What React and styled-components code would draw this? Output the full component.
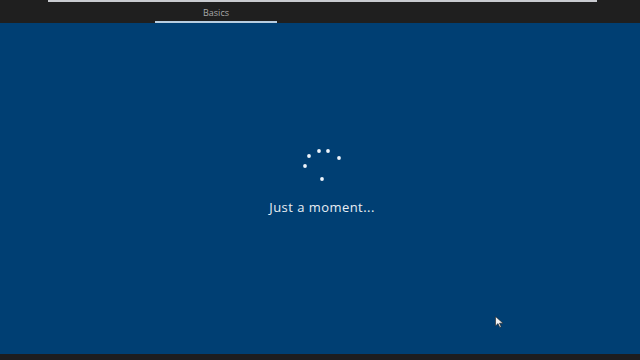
import React from 'react';
import styled, { createGlobalStyle } from 'styled-components';

const GlobalStyle = createGlobalStyle`
  html, body {
    margin: 0;
    padding: 0;
    background: #1e1e1e;
  }
  body {
    font-family: "Open Sans", "Noto Sans", sans-serif;
  }
`

const Screen = styled.div`
  position: relative;
  width: 640px;
  height: 360px;
  display: grid;
  grid-template-rows: 23px 1fr 6px;
  overflow: hidden;
  background: #1e1e1e;
`

const Header = styled.header`
  display: flex;
  flex-direction: column;
  background: #1f1f1f;
`

const Strip = styled.div`
  height: 2px;
  margin: 0 43px 0 48px;
  background: #c9cbd0;
`

const Tabs = styled.nav`
  flex: 1;
  display: flex;
  padding-left: 155px;
`

const Tab = styled.div`
  width: 122px;
  display: flex;
  align-items: center;
  justify-content: center;
  font-size: 9px;
  color: #a9a9a9;
  border-bottom: 2px solid ${p => (p.$active ? '#b8cde0' : 'transparent')};
  padding-top: 1px;
`

const Stage = styled.main`
  display: flex;
  flex-direction: column;
  align-items: center;
  padding-top: 125px;
  padding-left: 4px;
  background: #003f73;
`

const Message = styled.p`
  margin: 10px 0 0;
  font-size: 13px;
  font-weight: 400;
  letter-spacing: 0.45px;
  color: #e8eef4;
`

const Footer = styled.div`
  background: #1d1d1f;
`

const Cursor = styled.svg`
  position: absolute;
  left: 495px;
  top: 316px;
`

const Spinner = () => (
  <svg width="40" height="40" viewBox="0 0 40 40">
    {[[3, 18], [7, 8], [17, 3], [26, 3], [37, 10], [20, 31]].map(([x, y], i) => (
      <circle key={i} cx={x} cy={y} r="1.9" fill="#eef5fc" />
    ))}
  </svg>
)

const App = () => {
  return (
    <>
      <GlobalStyle />
      <Screen>
        <Header>
          <Strip />
          <Tabs>
            <Tab $active>Basics</Tab>
          </Tabs>
        </Header>
        <Stage>
          <Spinner />
          <Message>Just a moment...</Message>
        </Stage>
        <Footer />
        <Cursor width="9" height="12" viewBox="0 0 9 12">
          <path d="M0.5 0.5 L0.5 10 L3 7.6 L4.8 11.4 L6.2 10.8 L4.5 7.2 L8 7.2 Z" fill="#f2f2f2" stroke="#222" strokeWidth="0.6" />
        </Cursor>
      </Screen>
    </>
  )
}

export default App
